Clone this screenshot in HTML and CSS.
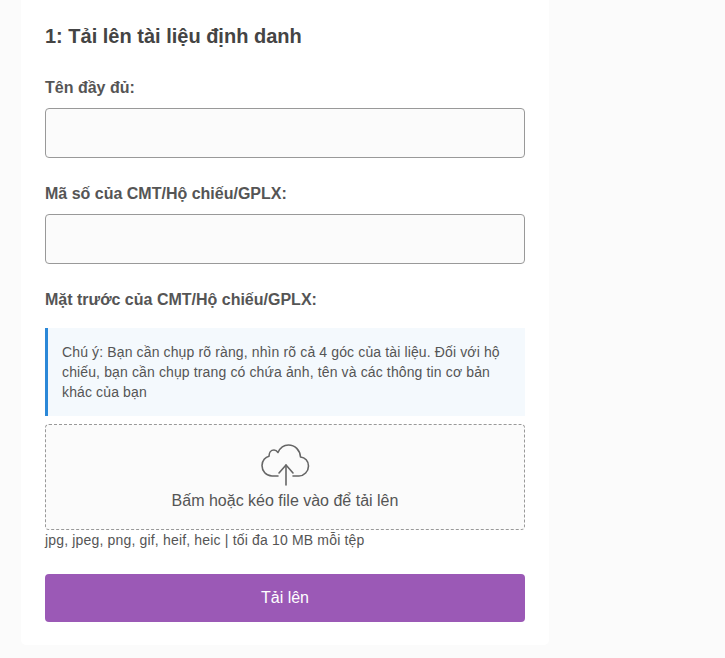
FILE: index.html
```html
<!doctype html>
<html lang="vi">
  <head>
    <meta charset="UTF-8" />
    <meta name="viewport" content="width=device-width, initial-scale=1.0" />
    <title>Tải lên tài liệu định danh</title>
    <link rel="stylesheet" href="styles.css">
  </head>
  <body>
    <div class="container">
      <h2>1: Tải lên tài liệu định danh</h2>
      <form class="form">
        <div class="field">
          <label for="full-name">Tên đầy đủ:</label>
          <input type="text" id="full-name" class="text-input" />
        </div>
        <div class="field">
          <label for="doc-number">Mã số của CMT/Hộ chiếu/GPLX:</label>
          <input type="text" id="doc-number" class="text-input" />
        </div>
        <div class="field upload-field">
          <label>Mặt trước của CMT/Hộ chiếu/GPLX:</label>
          <div class="note">
            Chú ý: Bạn cần chụp rõ ràng, nhìn rõ cả 4 góc của tài liệu. Đối với hộ chiếu, bạn cần chụp trang có chứa ảnh, tên và các thông tin cơ bản khác của bạn
          </div>
          <div class="dropzone">
            <svg class="cloud-icon" width="50" height="44" viewBox="0 0 50 44" fill="none" stroke="#666" stroke-width="1.6" stroke-linecap="round" stroke-linejoin="round">
              <path d="M18 33H12C6 33 2 28 2 22.500C2 17.500 5.500 14 9 13.200C9 9.500 11 7 14 7C15.800 7 17 8 18 9.500C20 5 24 2 28.500 2C35 2 40 7 40.500 14C45 14.500 48.500 18 48.500 23C48.500 28.500 44 33 39 33H33" />
              <path d="M26 42V22" />
              <path d="M19 30L26 22L33 30" />
            </svg>
            <div class="dropzone-text">Bấm hoặc kéo file vào để tải lên</div>
          </div>
          <div class="file-hint">jpg, jpeg, png, gif, heif, heic | tối đa 10 MB mỗi tệp</div>
        </div>
        <button type="button" class="submit-btn">Tải lên</button>
      </form>
    </div>
  </body>
</html>
```

FILE: styles.css
```css
body {
  font-family: "Liberation Sans", Arial, sans-serif;
  margin: 0;
  background-color: #fbfbfb;
  color: #555;
}

.container {
  width: 480px;
  margin-left: 21px;
  padding: 24px 24px 23px;
  background-color: white;
  border-radius: 0 0 5px 5px;
}

h2 {
  margin: 0;
  font-size: 20px;
  line-height: 24px;
  font-weight: bold;
  color: #444;
}

.form {
  margin-top: 30px;
}

.field {
  margin-bottom: 26px;
}

label {
  display: block;
  margin-bottom: 10px;
  font-size: 16px;
  line-height: 20px;
  font-weight: bold;
  color: #555;
}

.text-input {
  display: block;
  box-sizing: border-box;
  width: 100%;
  height: 50px;
  border: 1px solid #999;
  border-radius: 4px;
  background-color: #fbfbfb;
}

.upload-field {
  margin-bottom: 25px;
}

.upload-field label {
  margin-bottom: 18px;
}

.note {
  box-sizing: border-box;
  height: 88px;
  padding: 14px 14px 0;
  border-left: 3px solid #2b88d8;
  background-color: #f4f9fd;
  font-size: 14px;
  line-height: 20px;
  letter-spacing: 0.13px;
  color: #555;
}

.dropzone {
  box-sizing: border-box;
  height: 106px;
  margin-top: 8px;
  padding-top: 18px;
  border: 1px dashed #999;
  border-radius: 4px;
  background-color: #fbfbfb;
  text-align: center;
}

.cloud-icon {
  display: block;
  margin: 0 auto;
}

.dropzone-text {
  margin-top: 4px;
  font-size: 16px;
  line-height: 20px;
  color: #555;
}

.file-hint {
  margin-top: 1px;
  font-size: 14px;
  line-height: 18px;
  letter-spacing: 0.17px;
  color: #555;
}

.submit-btn {
  display: block;
  width: 100%;
  height: 48px;
  border: none;
  border-radius: 4px;
  background-color: #9b59b6;
  color: white;
  font-family: inherit;
  font-size: 16px;
}
```
